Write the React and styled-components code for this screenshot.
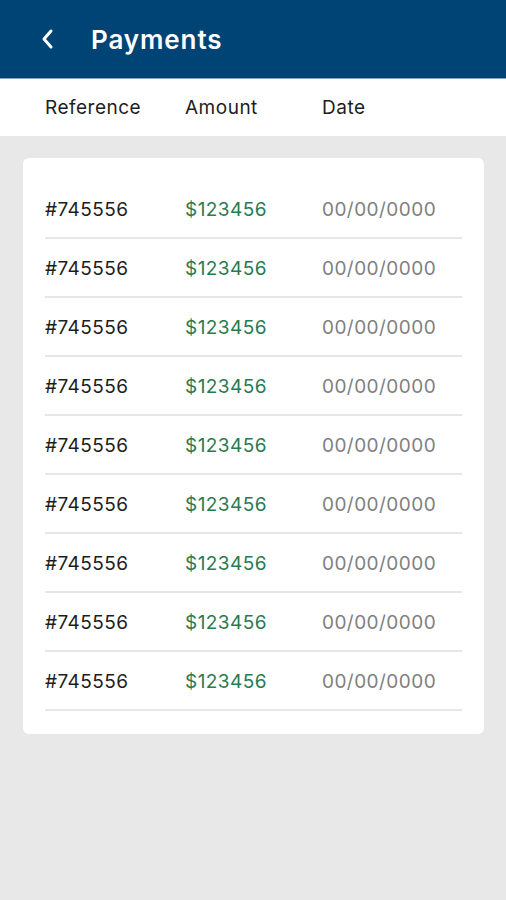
import styled, { createGlobalStyle } from 'styled-components';

const GlobalStyle = createGlobalStyle`
  html, body {
    margin: 0;
    padding: 0;
    background: #e8e8e8;
    font-family: Inter, Roboto, "Noto Sans", sans-serif;
  }
`;

const payments = Array.from({ length: 9 }, (_, i) => ({
  id: i,
  reference: '#745556',
  amount: '$123456',
  date: '00/00/0000',
}));

function App() {
  return (
    <>
      <GlobalStyle />
      <Screen>
        <TopBar>
          <BackButton aria-label="Back">
            <svg width="14" height="22" viewBox="0 0 14 22" fill="none">
              <path d="M11 3L4 11l7 8" stroke="#fff" strokeWidth="3" strokeLinecap="round" strokeLinejoin="round" />
            </svg>
          </BackButton>
          <Title>Payments</Title>
        </TopBar>
        <ColumnHeader>
          <HeadCell>Reference</HeadCell>
          <HeadCell>Amount</HeadCell>
          <HeadCell>Date</HeadCell>
        </ColumnHeader>
        <Body>
          <Card>
            {payments.map((p) => (
              <Row key={p.id}>
                <Cell>{p.reference}</Cell>
                <Cell $tone="amount">{p.amount}</Cell>
                <Cell $tone="muted">{p.date}</Cell>
              </Row>
            ))}
          </Card>
        </Body>
      </Screen>
    </>
  );
}

export default App;

const Screen = styled.div`
  min-height: 900px;
  background: #e8e8e8;
`;

const TopBar = styled.header`
  height: 79px;
  background: #004475;
  display: flex;
  align-items: center;
  padding: 0 0 0 40px;
  gap: 37px;
  box-sizing: border-box;
  border-bottom: 1px solid #8aa3b8;
`;

const BackButton = styled.button`
  border: none;
  background: none;
  padding: 0;
  display: flex;
  cursor: pointer;
`;

const Title = styled.h1`
  margin: 0;
  color: #fff;
  font-size: 26px;
  font-weight: 600;
  letter-spacing: 0.9px;
`;

const columns = `
  display: grid;
  grid-template-columns: 140px 137px 1fr;
`;

const ColumnHeader = styled.div`
  ${columns}
  height: 57px;
  align-items: center;
  padding-left: 45px;
  background: #fff;
`;

const HeadCell = styled.span`
  font-size: 19px;
  letter-spacing: 0.5px;
  color: #1d1d1d;
`;

const Body = styled.main`
  padding: 22px 22px 0 23px;
`;

const Card = styled.section`
  background: #fff;
  border-radius: 6px;
  padding: 22px 22px 23px 22px;
`;

const Row = styled.div`
  ${columns}
  height: 57px;
  align-items: center;
  border-bottom: 2px solid #e6e6e6;
`;

const Cell = styled.span`
  font-size: 19px;
  letter-spacing: 0.45px;
  color: ${({ $tone }) =>
    $tone === 'amount' ? '#2a7a50' : $tone === 'muted' ? '#808080' : '#1d1d1d'};
  padding-top: 2px;
`;
